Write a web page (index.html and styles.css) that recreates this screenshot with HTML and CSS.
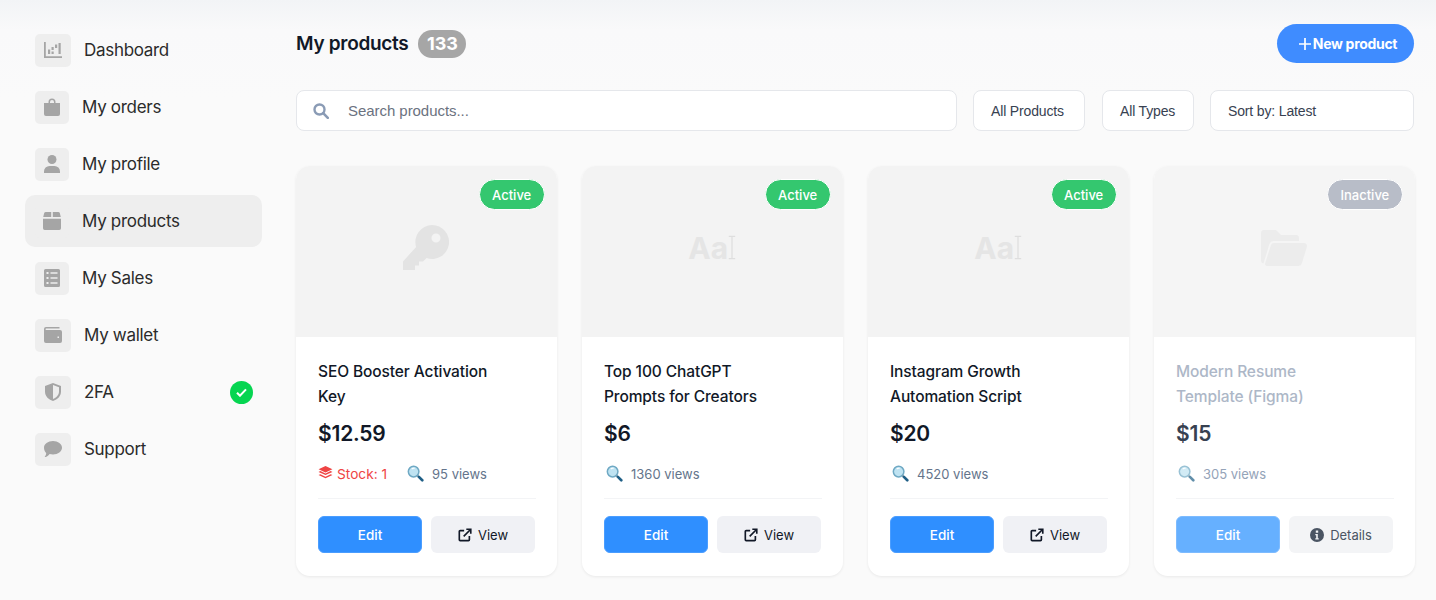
FILE: index.html
```html
<!DOCTYPE html>
<html lang="en">
  <head>
    <meta charset="UTF-8" />
    <meta name="viewport" content="width=device-width, initial-scale=1.0" />
    <title>My products</title>
    <link rel="stylesheet" href="styles.css">
  </head>
  <body>
    <svg class="sprite" xmlns="http://www.w3.org/2000/svg">
      <symbol id="i-lens" viewBox="0 0 18 18">
        <circle cx="7" cy="7" r="5.6" fill="#bfe3f2" stroke="#6fa9c4" stroke-width="1.6"/>
        <path d="M5 4.2a3.4 3.4 0 0 1 3-.6" fill="none" stroke="#fff" stroke-width="1.2"/>
        <path d="M11.2 11.2l1.3 1.3" stroke="#8a9aa5" stroke-width="2"/>
        <path d="M12.6 12.6l3.6 3.6" stroke="#1f5f86" stroke-width="2.8" stroke-linecap="round"/>
      </symbol>
      <symbol id="i-open" viewBox="0 0 16 16">
        <path d="M7 3H2.5A1 1 0 0 0 1.5 4v9.5a1 1 0 0 0 1 1H12a1 1 0 0 0 1-1V9" fill="none" stroke="currentColor" stroke-width="1.9"/>
        <path d="M6.5 9.5L14 2M9.5 1.4h5.1v5.1" fill="none" stroke="currentColor" stroke-width="1.9"/>
      </symbol>
      <symbol id="i-aa" viewBox="0 0 10 30">
        <path d="M1 1h8M1 29h8M5 1v28" fill="none" stroke="#dedede" stroke-width="1.5"/>
      </symbol>
    </svg>

    <div class="layout">
      <aside class="sidebar">
        <nav class="nav">
          <a class="nav-item wide">
            <span class="nav-icon">
              <svg viewBox="0 0 18 16"><path d="M0 0h1.800v14.200H18V16H0z"/><path d="M4 7.500h2.200V12H4zM7.500 5h2.200v3H7.500zM7.500 9.500h2.200V12H7.500zM11 2.500h2.200v3.500H11zM14.500 1h2.200v11h-2.200z"/></svg>
            </span>
            <span>Dashboard</span>
          </a>
          <a class="nav-item">
            <span class="nav-icon">
              <svg viewBox="0 0 16 18"><path d="M4.500 5V4a3.500 3.500 0 0 1 7 0v1H16v11a2 2 0 0 1-2 2H2a2 2 0 0 1-2-2V5zm1.500 0h4V4a2 2 0 0 0-4 0z"/></svg>
            </span>
            <span>My orders</span>
          </a>
          <a class="nav-item">
            <span class="nav-icon">
              <svg viewBox="0 0 16 18"><circle cx="8" cy="4.500" r="4.500"/><path d="M0 18v-1.500A5.500 5.500 0 0 1 5.500 11h5a5.500 5.500 0 0 1 5.500 5.500V18z"/></svg>
            </span>
            <span>My profile</span>
          </a>
          <a class="nav-item active">
            <span class="nav-icon">
              <svg viewBox="0 0 16 16"><path d="M2.500 0h4.800v4.500H0.200L1 1.200A1.600 1.600 0 0 1 2.500 0zM8.700 0h4.800A1.600 1.600 0 0 1 15 1.200l.8 3.300H8.700zM0 6h16v8.500a1.500 1.500 0 0 1-1.500 1.500h-13A1.500 1.500 0 0 1 0 14.500z"/></svg>
            </span>
            <span>My products</span>
          </a>
          <a class="nav-item">
            <span class="nav-icon">
              <svg viewBox="0 0 16 18"><path fill-rule="evenodd" d="M1.500 0h13A1.500 1.500 0 0 1 16 1.500v15a1.500 1.500 0 0 1-1.500 1.500h-13A1.500 1.500 0 0 1 0 16.500v-15A1.500 1.500 0 0 1 1.500 0zM2.500 3v2h2V3zM6.500 3.300v1.400h7V3.300zM2.500 8v2h2V8zM6.500 8.300v1.400h7V8.300zM2.500 13v2h2v-2zM6.500 13.300v1.400h7v-1.400z"/></svg>
            </span>
            <span>My Sales</span>
          </a>
          <a class="nav-item wide">
            <span class="nav-icon">
              <svg viewBox="0 0 18 16"><path fill-rule="evenodd" d="M2 0h13.500v1.500H2.200a.7.7 0 0 0 0 1.400H16a2 2 0 0 1 2 2V14a2 2 0 0 1-2 2H2a2 2 0 0 1-2-2V2a2 2 0 0 1 2-2zM13.500 9.500v1.500h1.500V9.500z"/></svg>
            </span>
            <span>My wallet</span>
          </a>
          <a class="nav-item wide">
            <span class="nav-icon">
              <svg viewBox="0 0 16 18"><path fill-rule="evenodd" d="M8 0l8 3v5.500c0 4.500-3.300 8-8 9.500-4.700-1.500-8-5-8-9.500V3zM8 2v14c3.400-1.300 6-4 6-7.500V4.300z"/></svg>
            </span>
            <span>2FA</span>
            <span class="verified">
              <svg viewBox="0 0 12 10"><path d="M1 5.200l3.300 3.300L11 1.500" fill="none" stroke="#fff" stroke-width="2.300"/></svg>
            </span>
          </a>
          <a class="nav-item wide">
            <span class="nav-icon">
              <svg viewBox="0 0 18 16"><path d="M9 0c5 0 9 3 9 6.700s-4 6.700-9 6.700c-1.200 0-2.400-.2-3.400-.5C4.300 14.800 2.300 16 .6 16c.9-1 1.500-2.400 1.600-4C.9 10.900 0 8.900 0 6.700 0 3 4 0 9 0z"/></svg>
            </span>
            <span>Support</span>
          </a>
        </nav>
      </aside>

      <main class="main">
        <header class="page-head">
          <div class="page-title">
            <h1>My products</h1>
            <span class="count">133</span>
          </div>
          <button class="btn-new">
            <svg viewBox="0 0 12 12"><path d="M6 0v12M0 6h12" stroke="#fff" stroke-width="1.700"/></svg>
            New product
          </button>
        </header>

        <div class="filters">
          <label class="search">
            <svg viewBox="0 0 16 16"><circle cx="6.500" cy="6.500" r="5" fill="none" stroke="#8a9bb5" stroke-width="2.400"/><path d="M10.200 10.200l4.600 4.600" stroke="#8a9bb5" stroke-width="2.600" stroke-linecap="round"/></svg>
            <input type="text" placeholder="Search products..." />
          </label>
          <div class="select sel-products">All Products</div>
          <div class="select sel-types">All Types</div>
          <div class="select sel-sort">Sort by: Latest</div>
        </div>

        <section class="grid">
          <article class="card">
            <div class="thumb">
              <span class="status">Active</span>
              <svg class="thumb-key" viewBox="0 0 46 46"><path fill-rule="evenodd" d="M29 0a17 17 0 1 1-5.400 33.100L20 36.500h-4v4h-4v4.500H0v-8.500L13.100 22A17 17 0 0 1 29 0zm4 8.500a4.500 4.500 0 1 0 0 9 4.500 4.500 0 0 0 0-9z"/></svg>
            </div>
            <div class="card-body">
              <h2>SEO Booster Activation<br>Key</h2>
              <div class="price">$12.59</div>
              <div class="meta">
                <span class="stock">
                  <svg viewBox="0 0 14 14"><path d="M7 0l6.500 3L7 6 .5 3zM.5 5.500L2.200 4.700 7 7l4.800-2.300 1.700.8L7 8.500zM.5 8.500l1.700-.8L7 10l4.800-2.300 1.700.8L7 11.500z"/></svg>
                  Stock: 1
                </span>
                <span class="views"><svg><use href="#i-lens"/></svg>95 views</span>
              </div>
              <div class="actions">
                <button class="btn-edit">Edit</button>
                <button class="btn-alt"><svg><use href="#i-open"/></svg>View</button>
              </div>
            </div>
          </article>

          <article class="card">
            <div class="thumb">
              <span class="status">Active</span>
              <span class="thumb-aa">Aa<svg><use href="#i-aa"/></svg></span>
            </div>
            <div class="card-body">
              <h2>Top 100 ChatGPT<br>Prompts for Creators</h2>
              <div class="price">$6</div>
              <div class="meta">
                <span class="views"><svg><use href="#i-lens"/></svg>1360 views</span>
              </div>
              <div class="actions">
                <button class="btn-edit">Edit</button>
                <button class="btn-alt"><svg><use href="#i-open"/></svg>View</button>
              </div>
            </div>
          </article>

          <article class="card">
            <div class="thumb">
              <span class="status">Active</span>
              <span class="thumb-aa">Aa<svg><use href="#i-aa"/></svg></span>
            </div>
            <div class="card-body">
              <h2>Instagram Growth<br>Automation Script</h2>
              <div class="price">$20</div>
              <div class="meta">
                <span class="views"><svg><use href="#i-lens"/></svg>4520 views</span>
              </div>
              <div class="actions">
                <button class="btn-edit">Edit</button>
                <button class="btn-alt"><svg><use href="#i-open"/></svg>View</button>
              </div>
            </div>
          </article>

          <article class="card inactive">
            <div class="thumb">
              <span class="status">Inactive</span>
              <svg class="thumb-folder" viewBox="0 0 46 36"><path d="M3 0h12l5 5h15a3 3 0 0 1 3 3v3H13a5 5 0 0 0-4.800 3.600L2.500 33.500A3 3 0 0 1 0 30.500V3a3 3 0 0 1 3-3z"/><path d="M13 13h30a3 3 0 0 1 2.900 3.800l-5 16.500A3.700 3.700 0 0 1 37.500 36H6a2 2 0 0 1-1.900-2.600L10 15a3 3 0 0 1 3-2z"/></svg>
            </div>
            <div class="card-body">
              <h2>Modern Resume<br>Template (Figma)</h2>
              <div class="price">$15</div>
              <div class="meta">
                <span class="views"><svg><use href="#i-lens"/></svg>305 views</span>
              </div>
              <div class="actions">
                <button class="btn-edit">Edit</button>
                <button class="btn-alt">
                  <svg viewBox="0 0 14 14"><path fill-rule="evenodd" fill="currentColor" d="M7 0a7 7 0 1 1 0 14A7 7 0 0 1 7 0zM5.800 2.600v2.200h2.400V2.600zM5.300 6v1.300h.9v2.900h-.9v1.300h3.400v-1.300h-.9V6z"/></svg>
                  Details
                </button>
              </div>
            </div>
          </article>
        </section>
      </main>
    </div>
  </body>
</html>
```

FILE: styles.css
```css
* {
  margin: 0;
  padding: 0;
  box-sizing: border-box;
}

body {
  height: 600px;
  overflow: hidden;
  font-family: Inter, "Noto Sans", sans-serif;
  color: #111827;
  background: linear-gradient(#f2f4f6 0, #f9f9fa 30px, #fafafa 100px);
}

.sprite {
  display: none;
}

.layout {
  display: flex;
}

/* sidebar */
.sidebar {
  width: 296px;
  flex-shrink: 0;
  padding: 24px 0 0 25px;
}

.nav {
  width: 237px;
  display: flex;
  flex-direction: column;
  gap: 5px;
}

.nav-item {
  height: 52px;
  display: flex;
  align-items: center;
  gap: 13px;
  padding-left: 10px;
  border-radius: 10px;
  font-size: 17px;
  letter-spacing: -0.3px;
  color: #2b2b2b;
}

.nav-item.active {
  background: #eeeeee;
}

.nav-icon {
  width: 34px;
  height: 33px;
  display: flex;
  align-items: center;
  justify-content: center;
  background: #eeeeee;
  border-radius: 5px;
}

.nav-item.wide .nav-icon {
  width: 36px;
}

.nav-icon svg {
  width: 18px;
  height: 18px;
  fill: #a5a5a5;
}

.verified {
  width: 23px;
  height: 23px;
  margin-left: auto;
  margin-right: 9px;
  display: flex;
  align-items: center;
  justify-content: center;
  background: #06d551;
  border-radius: 50%;
}

.verified svg {
  width: 11px;
  height: 9px;
}

/* main column */
.main {
  width: 1118px;
  padding-top: 24px;
}

.page-head {
  height: 39px;
  display: flex;
  align-items: center;
  justify-content: space-between;
}

.page-title {
  display: flex;
  align-items: center;
  gap: 10px;
}

h1 {
  font-size: 19px;
  font-weight: 600;
  letter-spacing: -0.3px;
}

.count {
  width: 48px;
  height: 28px;
  display: flex;
  align-items: center;
  justify-content: center;
  background: #a6a6a6;
  border-radius: 14px;
  color: #fff;
  font-size: 18px;
  font-weight: 700;
}

.btn-new {
  width: 137px;
  height: 39px;
  padding-left: 5px;
  display: flex;
  align-items: center;
  justify-content: center;
  gap: 2px;
  background: #3f8cff;
  border: none;
  border-radius: 20px;
  color: #fff;
  font-family: inherit;
  font-size: 14px;
  font-weight: 700;
  letter-spacing: -0.3px;
}

.btn-new svg {
  width: 12px;
  height: 12px;
}

.filters {
  display: flex;
  margin-top: 27px;
  height: 41px;
}

.search {
  width: 661px;
  display: flex;
  align-items: center;
  gap: 19px;
  padding-left: 16px;
  background: #fff;
  border: 1px solid #e5e7eb;
  border-radius: 8px;
}

.search svg {
  width: 16px;
  height: 16px;
  flex-shrink: 0;
}

.search input {
  flex: 1;
  border: none;
  outline: none;
  background: none;
  font-family: "Liberation Sans", Arial, sans-serif;
  font-size: 15px;
  letter-spacing: -0.05px;
}

.search input::placeholder {
  color: #6b7280;
}

.select {
  display: flex;
  align-items: center;
  background: #fff;
  border: 1px solid #e5e7eb;
  border-radius: 8px;
  padding-left: 17px;
  font-family: "Liberation Sans", Arial, sans-serif;
  font-size: 14px;
  letter-spacing: -0.15px;
  color: #374151;
}

.sel-products {
  width: 112px;
  margin-left: 16px;
}

.sel-types {
  width: 92px;
  margin-left: 17px;
}

.sel-sort {
  width: 204px;
  margin-left: 16px;
}

/* product cards */
.grid {
  width: 1118px;
  margin-top: 35px;
  display: grid;
  grid-template-columns: repeat(4, 260.500px);
  column-gap: 25.500px;
}

.card {
  background: #fff;
  border-radius: 14px;
  box-shadow: 0 1px 3px rgba(0, 0, 0, 0.07);
  overflow: hidden;
}

.thumb {
  position: relative;
  height: 171px;
  padding-bottom: 8px;
  display: flex;
  align-items: center;
  justify-content: center;
  background: #f3f3f3;
}

.status {
  position: absolute;
  top: 13px;
  right: 12px;
  height: 31px;
  padding: 0 12.250px;
  display: flex;
  align-items: center;
  background: #34c76f;
  border: 1px solid #fff;
  border-radius: 16px;
  color: #fff;
  font-size: 13px;
  font-weight: 500;
}

.thumb-key {
  width: 46px;
  height: 46px;
  fill: #e3e3e3;
}

.thumb-aa {
  display: flex;
  align-items: center;
  font-size: 30px;
  font-weight: 700;
  color: #e5e5e5;
}

.thumb-aa svg {
  width: 8px;
  height: 29px;
}

.thumb-folder {
  width: 46px;
  height: 36px;
  fill: #ececec;
}

.card-body {
  padding: 22px 21px 23px 22px;
}

h2 {
  font-size: 15.500px;
  font-weight: 500;
  line-height: 25px;
  letter-spacing: -0.1px;
  color: #111827;
}

.price {
  margin-top: 10px;
  font-size: 21px;
  font-weight: 600;
  line-height: 30px;
  letter-spacing: -0.2px;
}

.meta {
  height: 25px;
  margin-top: 12px;
  display: flex;
  align-items: center;
  gap: 18px;
  font-size: 13px;
  color: #64748b;
}

.stock {
  display: flex;
  align-items: center;
  gap: 4px;
  font-size: 13.700px;
  color: #ef4444;
}

.stock svg {
  width: 15px;
  height: 15px;
  fill: #ef4444;
}

.views {
  display: flex;
  align-items: center;
  gap: 8px;
  padding-left: 2px;
}

.views svg {
  width: 17px;
  height: 17px;
}

.actions {
  margin-top: 12px;
  padding-top: 17px;
  border-top: 1px solid #f3f4f6;
  display: grid;
  grid-template-columns: 104px 104px;
  column-gap: 9px;
}

.actions button {
  height: 37px;
  display: flex;
  align-items: center;
  justify-content: center;
  gap: 6px;
  border-radius: 6px;
  font-family: inherit;
  font-size: 13.500px;
  font-weight: 500;
}

.btn-edit {
  background: #2f8fff;
  border: 1px solid #4a9dff;
  color: #fff;
}

.actions .btn-alt {
  background: #f0f1f5;
  border: none;
  color: #111827;
  font-size: 13px;
  font-weight: 400;
}

.btn-alt svg {
  width: 14px;
  height: 14px;
}

/* inactive product */
.inactive .thumb {
  background: #f5f5f5;
}

.inactive .status {
  background: #b8bdc8;
}

.inactive h2 {
  color: #adb7c7;
}

.inactive .price {
  color: #374151;
}

.inactive .meta {
  color: #94a3b8;
}

.inactive .views svg {
  opacity: 0.7;
}

.inactive .btn-edit {
  background: #66b0ff;
  border-color: #7dbbff;
}

.inactive .btn-alt {
  background: #f3f4f6;
  color: #4b5563;
}
```
